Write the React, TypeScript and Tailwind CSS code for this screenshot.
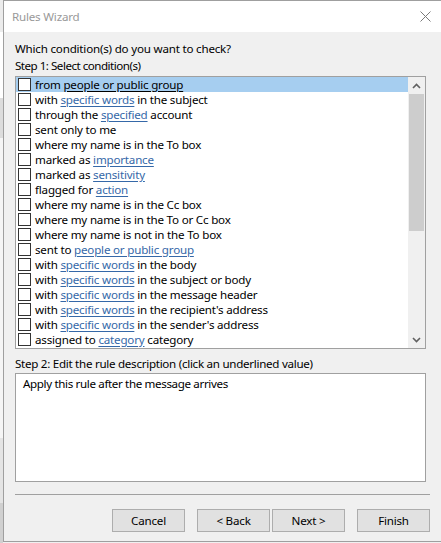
import React from 'react';

type Part = string | { link: string };

const conditions: Part[][] = [
  ['from ', { link: 'people or public group' }],
  ['with ', { link: 'specific words' }, ' in the subject'],
  ['through the ', { link: 'specified' }, ' account'],
  ['sent only to me'],
  ['where my name is in the To box'],
  ['marked as ', { link: 'importance' }],
  ['marked as ', { link: 'sensitivity' }],
  ['flagged for ', { link: 'action' }],
  ['where my name is in the Cc box'],
  ['where my name is in the To or Cc box'],
  ['where my name is not in the To box'],
  ['sent to ', { link: 'people or public group' }],
  ['with ', { link: 'specific words' }, ' in the body'],
  ['with ', { link: 'specific words' }, ' in the subject or body'],
  ['with ', { link: 'specific words' }, ' in the message header'],
  ['with ', { link: 'specific words' }, " in the recipient's address"],
  ['with ', { link: 'specific words' }, " in the sender's address"],
  ['assigned to ', { link: 'category' }, ' category'],
];

const font = { fontFamily: '"Noto Sans", "Open Sans", sans-serif' };

const ConditionRow: React.FC<{ parts: Part[]; selected: boolean }> = ({ parts, selected }) => (
  <div className={`flex items-center h-[15px] ${selected ? 'bg-[#a6cef0]' : ''}`}>
    <span className="ml-[2px] w-[13px] h-[13px] border border-[#333] bg-white shrink-0" />
    <span className="ml-[4px] whitespace-nowrap leading-[14px] text-black">
      {parts.map((p, i) =>
        typeof p === 'string' ? (
          <span key={i} className="whitespace-pre">{p}</span>
        ) : (
          <span key={i} className={`underline underline-offset-[2px] ${selected ? 'text-black' : 'text-[#3568a8]'}`}>
            {p.link}
          </span>
        )
      )}
    </span>
  </div>
);

const Chevron: React.FC<{ down?: boolean }> = ({ down }) => (
  <svg width="9" height="6" viewBox="0 0 9 6" className={down ? 'rotate-180' : ''}>
    <path d="M1 5 L4.5 1.5 L8 5" fill="none" stroke="#606060" strokeWidth="1.6" />
  </svg>
);

const WizardButton: React.FC<{ label: string }> = ({ label }) => (
  <button className="w-[73px] h-[23px] bg-[#e1e1e1] border border-[#adadad] text-black leading-none">
    {label}
  </button>
);

export default function App() {
  return (
    <div
      className="flex w-[441px] h-[543px] overflow-hidden bg-[#f0f0f0] text-[11.6px] tracking-[-0.2px]"
      style={font}
    >
      {/* sliver of the window behind */}
      <div className="w-[3px] flex flex-col shrink-0">
        <div className="h-[32px] bg-[#ececec]" />
        <div className="h-[66px] bg-white" />
        <div className="h-[40px] bg-[#dcdcdc]" />
        <div className="h-[300px] bg-[#f5f5f5]" />
        <div className="h-[65px] bg-[#e4e4e4]" />
        <div className="flex-1 bg-[#d0d0d0]" />
      </div>

      <div className="flex flex-col flex-1 h-[542px] border-l border-t border-b border-[#9f9f9f] bg-[#f0f0f0]">
        {/* title bar */}
        <div className="flex items-center justify-between h-[31px] bg-white shrink-0">
          <span className="ml-[8px] text-[#999]">Rules Wizard</span>
          <svg width="11" height="11" viewBox="0 0 11 11" className="mr-[10px]">
            <path d="M0.5 0.5 L10.5 10.5 M10.5 0.5 L0.5 10.5" stroke="#7a7a7a" strokeWidth="1" />
          </svg>
        </div>

        <div className="flex flex-col pl-[11px] text-black">
          <div className="mt-[9px] leading-[16px]">Which condition(s) do you want to check?</div>
          <div className="mt-[1px] leading-[16px] tracking-[-0.5px]">Step 1: Select condition(s)</div>

          <div className="mt-[2px] flex w-[411px] h-[273px] border border-[#a0a0a0] bg-white">
            <div className="flex-1 flex flex-col">
              {conditions.map((c, i) => (
                <ConditionRow key={i} parts={c} selected={i === 0} />
              ))}
            </div>
            <div className="w-[17px] flex flex-col bg-[#f0f0f0]">
              <div className="h-[17px] flex items-center justify-center">
                <Chevron />
              </div>
              <div className="flex-1 flex flex-col px-[1px]">
                <div className="h-[137px] bg-[#cdcdcd]" />
              </div>
              <div className="h-[17px] flex items-center justify-center">
                <Chevron down />
              </div>
            </div>
          </div>

          <div className="mt-[7px] leading-[16px] tracking-[-0.28px]">
            Step 2: Edit the rule description (click an underlined value)
          </div>
          <div className="mt-[1px] w-[411px] h-[109px] border border-[#a0a0a0] bg-white px-[7px] pt-[2px] leading-[16px] tracking-[-0.36px]">
            Apply this rule after the message arrives
          </div>

          <div className="mt-[12px] w-[415px] h-px bg-[#a0a0a0]" />

          <div className="mt-[14px] w-[415px] flex justify-end">
            <WizardButton label="Cancel" />
            <div className="w-[12px]" />
            <WizardButton label="< Back" />
            <div className="w-[2px]" />
            <WizardButton label="Next >" />
            <div className="w-[12px]" />
            <WizardButton label="Finish" />
          </div>
        </div>
      </div>
    </div>
  );
}
